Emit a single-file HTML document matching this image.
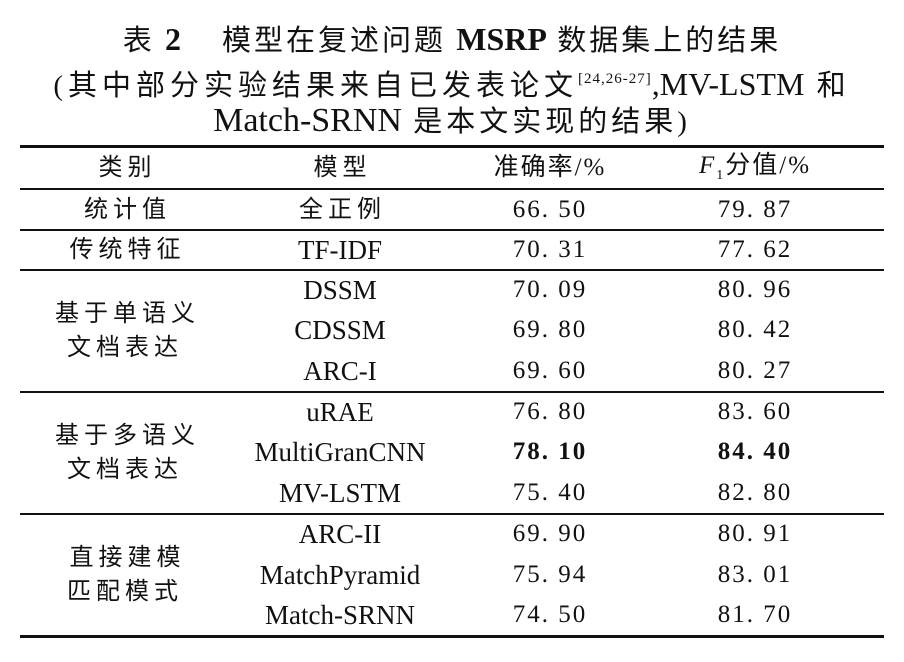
<!DOCTYPE html>
<html><head><meta charset="utf-8"><style>
body{margin:0;width:904px;height:662px;background:#fff;position:relative;overflow:hidden;font-family:"Liberation Serif","Noto Serif CJK SC",serif;color:#111}
.t{position:absolute;left:0;width:904px;text-align:center;font-size:29px;line-height:36px;white-space:nowrap;font-family:"Liberation Serif","Noto Sans CJK SC",serif}
.t .e{letter-spacing:0;font-size:32px}
.c{position:absolute;text-align:center;white-space:nowrap;font-size:27px;line-height:30px;transform:translate(-50%,-50%);font-family:"Liberation Serif","Noto Sans CJK SC",serif}
.z{font-size:24px;letter-spacing:5px;text-indent:5px}
.n{letter-spacing:2px;font-size:25px}
.l{position:absolute;left:20px;width:864px;background:#111}
</style></head><body>
<div class="t" style="top:21px;letter-spacing:3px">表 <b class="e">2</b>&nbsp;&nbsp;&nbsp;&nbsp;模型在复述问题 <b class="e">MSRP</b> 数据集上的结果</div>
<div class="t" style="top:61px;letter-spacing:5px">(其中部分实验结果来自已发表论文<sup style="font-size:15px;vertical-align:12px;letter-spacing:1px">[24,26-27]</sup><span class="e">,MV-LSTM</span> 和</div>
<div class="t" style="top:103px;letter-spacing:4px"><span class="e" style="font-size:34px">Match-SRNN</span> 是本文实现的结果)</div>
<div class="l" style="top:145px;height:3px"></div>
<div class="l" style="top:188px;height:2px"></div>
<div class="l" style="top:229px;height:2px"></div>
<div class="l" style="top:269px;height:2px"></div>
<div class="l" style="top:391px;height:2px"></div>
<div class="l" style="top:513px;height:2px"></div>
<div class="l" style="top:635px;height:3px"></div>

<div class="c z" style="left:125px;top:168px">类别</div>
<div class="c z" style="left:340px;top:168px">模型</div>
<div class="c" style="left:550px;top:168px;font-size:25px;letter-spacing:2px">准确率/%</div>
<div class="c" style="left:755px;top:168px;font-size:25px;letter-spacing:2px"><i>F</i><span style="font-size:14px;position:relative;top:6px">1</span>分值/%</div>

<div class="c z" style="left:125px;top:210px">统计值</div>
<div class="c z" style="left:340px;top:210px">全正例</div>
<div class="c n" style="left:550px;top:210px">66. 50</div>
<div class="c n" style="left:755px;top:210px">79. 87</div>

<div class="c z" style="left:125px;top:250px">传统特征</div>
<div class="c" style="left:340px;top:250px">TF-IDF</div>
<div class="c n" style="left:550px;top:250px">70. 31</div>
<div class="c n" style="left:755px;top:250px">77. 62</div>

<div class="c z" style="left:125px;top:331px;line-height:34px">基于单语义<br>文档表达</div>
<div class="c" style="left:340px;top:290px">DSSM</div>
<div class="c n" style="left:550px;top:290px">70. 09</div>
<div class="c n" style="left:755px;top:290px">80. 96</div>
<div class="c" style="left:340px;top:330px">CDSSM</div>
<div class="c n" style="left:550px;top:330px">69. 80</div>
<div class="c n" style="left:755px;top:330px">80. 42</div>
<div class="c" style="left:340px;top:371px">ARC-I</div>
<div class="c n" style="left:550px;top:371px">69. 60</div>
<div class="c n" style="left:755px;top:371px">80. 27</div>

<div class="c z" style="left:125px;top:453px;line-height:34px">基于多语义<br>文档表达</div>
<div class="c" style="left:340px;top:412px">uRAE</div>
<div class="c n" style="left:550px;top:412px">76. 80</div>
<div class="c n" style="left:755px;top:412px">83. 60</div>
<div class="c" style="left:340px;top:452px">MultiGranCNN</div>
<div class="c n" style="left:550px;top:452px"><b>78. 10</b></div>
<div class="c n" style="left:755px;top:452px"><b>84. 40</b></div>
<div class="c" style="left:340px;top:493px">MV-LSTM</div>
<div class="c n" style="left:550px;top:493px">75. 40</div>
<div class="c n" style="left:755px;top:493px">82. 80</div>

<div class="c z" style="left:125px;top:575px;line-height:34px">直接建模<br>匹配模式</div>
<div class="c" style="left:340px;top:534px">ARC-II</div>
<div class="c n" style="left:550px;top:534px">69. 90</div>
<div class="c n" style="left:755px;top:534px">80. 91</div>
<div class="c" style="left:340px;top:575px">MatchPyramid</div>
<div class="c n" style="left:550px;top:575px">75. 94</div>
<div class="c n" style="left:755px;top:575px">83. 01</div>
<div class="c" style="left:340px;top:615px">Match-SRNN</div>
<div class="c n" style="left:550px;top:615px">74. 50</div>
<div class="c n" style="left:755px;top:615px">81. 70</div>
</body></html>
